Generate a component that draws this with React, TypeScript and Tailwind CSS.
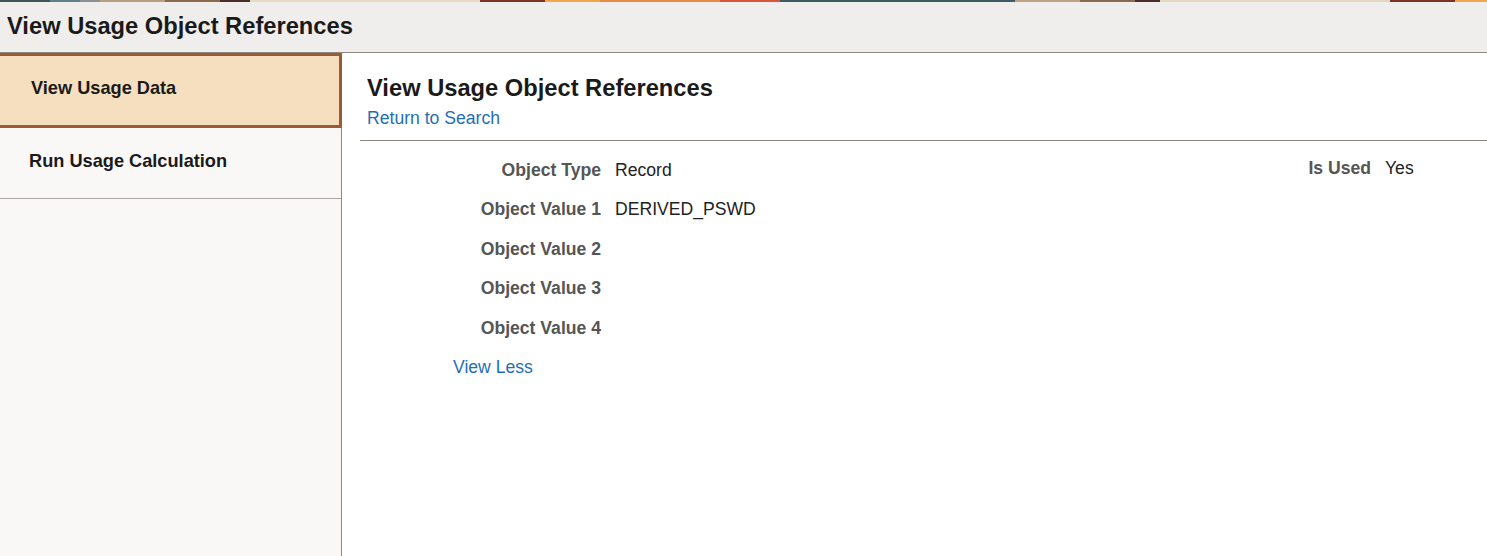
import React from 'react';

const stripe: [number, number, string][] = [
  [0, 50, '#3d555b'],
  [50, 80, '#5f7f86'],
  [80, 100, '#8a9296'],
  [100, 165, '#b99f80'],
  [165, 220, '#8b6a4e'],
  [220, 250, '#4a2f2b'],
  [250, 480, '#e6dbc2'],
  [480, 545, '#7a3324'],
  [545, 600, '#efa94a'],
  [600, 720, '#e88c45'],
  [720, 780, '#d9543c'],
  [780, 1015, '#3f5c63'],
  [1015, 1080, '#bda383'],
  [1080, 1135, '#8a6a50'],
  [1135, 1160, '#4b2f2b'],
  [1160, 1390, '#e3d8be'],
  [1390, 1455, '#7a3324'],
  [1455, 1487, '#efa94a'],
];

function BannerStrip() {
  return (
    <svg className="block h-[2px] w-full" viewBox="0 0 1487 2" preserveAspectRatio="none">
      {stripe.map(([a, b, c]) => (
        <rect key={a} x={a} y={0} width={b - a} height={2} fill={c} />
      ))}
    </svg>
  );
}

const rows: { label: string; value: string }[] = [
  { label: 'Object Type', value: 'Record' },
  { label: 'Object Value 1', value: 'DERIVED_PSWD' },
  { label: 'Object Value 2', value: '' },
  { label: 'Object Value 3', value: '' },
  { label: 'Object Value 4', value: '' },
];

export default function App() {
  return (
    <div
      className="flex h-[556px] w-full flex-col overflow-hidden bg-white text-[#222]"
      style={{ fontFamily: '"Liberation Sans", Arial, sans-serif' }}
    >
      <header className="shrink-0 border-b border-[#8d8780] bg-[#f0eeec]">
        <BannerStrip />
        <div className="flex h-[50px] items-center px-[7px]">
          <h1 className="text-[23.7px] font-bold leading-none text-[#1a1a1a]">View Usage Object References</h1>
        </div>
      </header>

      <div className="flex min-h-0 flex-1">
        <nav className="w-[342px] shrink-0 border-r border-[#8d8780] bg-[#f9f8f6]">
          <div className="-mr-px flex h-[75px] items-center border-[3px] border-l-0 border-[#9d5a36] bg-[#f5dfbe] pb-[3px] pl-[31px] text-[18.2px] font-bold text-[#1a1a1a]">
            View Usage Data
          </div>
          <div className="flex h-[71px] items-center border-b border-[#a9a49f] pb-[2px] pl-[29px] text-[18.2px] font-bold text-[#1a1a1a]">
            Run Usage Calculation
          </div>
        </nav>

        <main className="min-w-0 flex-1 pl-[18px]">
          <div className="px-[7px] pt-[21px]">
            <h2 className="text-[23.7px] font-bold leading-[28px] text-[#1a1a1a]">View Usage Object References</h2>
            <a className="mt-[5px] block w-fit text-[17.6px] leading-[22px] text-[#1f6fb8]" href="#">
              Return to Search
            </a>
          </div>
          <div className="mt-[11px] border-t border-[#8d8780]" />

          <div className="pt-[9px]">
            {rows.map((r, i) => (
              <div key={r.label} className="flex h-[39.5px] items-center text-[17.6px]">
                <div className="w-[241px] shrink-0 text-right font-bold text-[#555]">{r.label}</div>
                <div className="w-[500px] shrink-0 pl-[14px] text-[#222]">{r.value}</div>
                {i === 0 && (
                  <div className="flex items-center pb-[4px]">
                    <div className="w-[270px] text-right font-bold text-[#555]">Is Used</div>
                    <div className="pl-[14px] text-[#222]">Yes</div>
                  </div>
                )}
              </div>
            ))}
            <div className="flex h-[39.5px] items-center pl-[93px] text-[17.6px]">
              <a className="text-[#1f6fb8]" href="#">
                View Less
              </a>
            </div>
          </div>
        </main>
      </div>
    </div>
  );
}
